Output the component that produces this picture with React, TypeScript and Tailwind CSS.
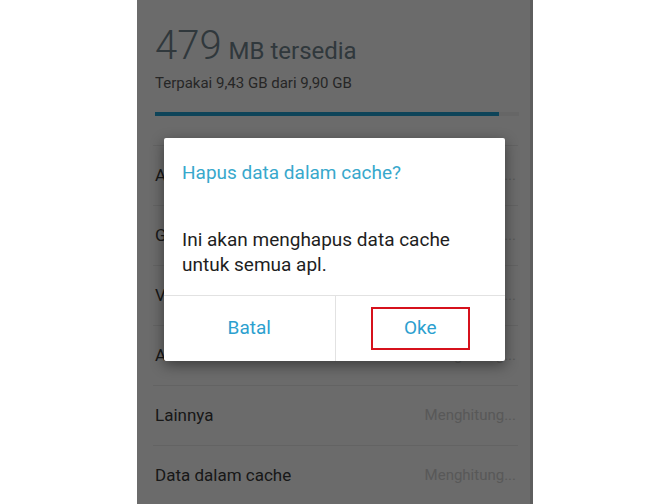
const rows = ["Aplikasi", "Gambar", "Video", "Audio", "Lainnya", "Data dalam cache"];

export default function App() {
  return (
    <div className="h-[504px] w-[656px] overflow-hidden bg-white pl-[137px] font-['Roboto',sans-serif]">
      <div className="relative h-[504px] w-[396px] overflow-hidden bg-white">
        <div className="pl-[18px] pr-[15px]">
          <div className="flex items-baseline pt-[24px] leading-[44px] text-[#72858f]">
            <span className="text-[40px] font-light">479</span>
            <span className="ml-[7px] text-[24px]">MB tersedia</span>
          </div>
          <p className="text-[15px] leading-[20px] text-[#5c5c5c]">Terpakai 9,43 GB dari 9,90 GB</p>
          <div className="mt-[19px] flex h-[4px] w-[364px] bg-[#f2f2f2]">
            <div className="h-full w-[344px] bg-[#23a3d4]" />
          </div>
        </div>

        <div className="mt-[29px] ml-[16px] mr-[15px] border-t border-[#ececec]">
          {rows.map((row) => (
            <div key={row} className="flex h-[60px] items-center justify-between border-b border-[#ececec] pl-[2px] pr-[2px]">
              <span className="text-[17px] text-[#3a3a3a]">{row}</span>
              <span className="text-[15px] text-[#d2d2d2]">Menghitung...</span>
            </div>
          ))}
        </div>

        <div className="absolute inset-0 bg-black/[0.58]" />
        <div className="absolute right-0 top-0 h-full w-[3px] bg-black/[0.12]" />

        <div className="absolute left-[27px] top-[138px] flex h-[223px] w-[341px] flex-col rounded-[2px] bg-white shadow-[0_4px_14px_rgba(0,0,0,0.45)]">
          <h2 className="pl-[18px] pt-[22px] text-[19px] leading-[26px] text-[#38a8cc]">Hapus data dalam cache?</h2>
          <p className="mt-[41px] pl-[18px] text-[19px] leading-[25px] text-[#1e1e1e]">
            Ini akan menghapus data cache
            <br />
            untuk semua apl.
          </p>
          <div className="flex-1" />
          <div className="grid h-[66px] grid-cols-2 border-t border-[#e2e2e2]">
            <button className="flex items-center justify-center text-[19px] text-[#2c9fcf]">Batal</button>
            <div className="flex items-center justify-center border-l border-[#e2e2e2]">
              <button className="flex h-[43px] w-[99px] items-center justify-center border-2 border-[#d6111c] text-[19px] text-[#2c9fcf]">
                Oke
              </button>
            </div>
          </div>
        </div>
      </div>
    </div>
  );
}
